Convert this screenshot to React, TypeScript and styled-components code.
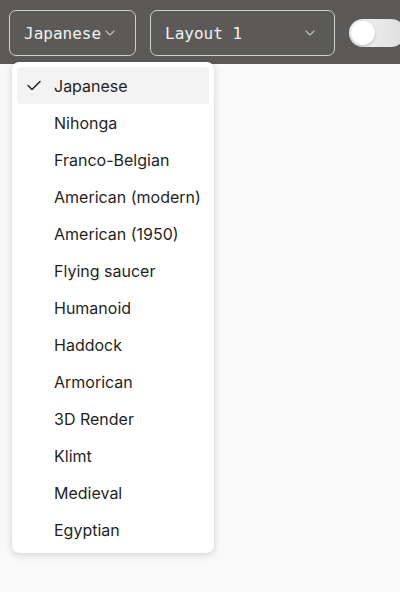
import React from "react";
import styled, { createGlobalStyle } from "styled-components";

const Global = createGlobalStyle`
  html, body { margin: 0; padding: 0; }
  body { background: #f9f9f9; font-family: Inter, "Noto Sans", sans-serif; overflow: hidden; }
  #root { width: 400px; height: 592px; }
`;

const Page = styled.div`
  position: relative;
  width: 400px;
  height: 592px;
  background: #f9f9f9;
  overflow: hidden;
`;

const Toolbar = styled.div`
  height: 64px;
  background: #5b5a58;
  display: flex;
  align-items: center;
  padding: 0 0 0 9px;
  gap: 14px;
  box-sizing: border-box;
`;

const SelectButton = styled.button<{ $w: number; $spread?: boolean }>`
  width: ${(p) => p.$w}px;
  flex-shrink: 0;
  height: 46px;
  box-sizing: border-box;
  border: 1px solid #cfcfcd;
  border-radius: 7px;
  background: transparent;
  color: #f2f2f2;
  font-family: "DejaVu Sans Mono", monospace;
  font-size: 16px;
  display: flex;
  align-items: center;
  justify-content: ${(p) => (p.$spread ? "space-between" : "flex-start")};
  gap: 4px;
  padding: 0 19px 0 14px;
  margin-top: 2px;
`;

const Chevron = () => (
  <svg width="10" height="6" viewBox="0 0 10 6" fill="none">
    <path d="M1 1l4 4 4-4" stroke="#bdbdbb" strokeWidth="1.2" strokeLinecap="round" strokeLinejoin="round" />
  </svg>
);

const Toggle = styled.div`
  width: 56px;
  height: 28px;
  border-radius: 14px;
  background: linear-gradient(90deg, #f4f4f4, #dedede);
  position: relative;
  margin-top: 2px;
  flex-shrink: 0;
`;

const Knob = styled.div`
  position: absolute;
  left: 2px;
  top: 2px;
  width: 24px;
  height: 24px;
  border-radius: 50%;
  background: #fff;
  box-shadow: 0 1px 3px rgba(0, 0, 0, 0.25);
`;

const Menu = styled.ul`
  position: absolute;
  left: 12px;
  top: 62px;
  width: 202px;
  margin: 0;
  padding: 5px;
  box-sizing: border-box;
  list-style: none;
  background: #fff;
  border-radius: 7px;
  box-shadow: 0 2px 8px rgba(0, 0, 0, 0.15), 0 0 1px rgba(0, 0, 0, 0.12);
`;

const Item = styled.li<{ $active?: boolean }>`
  height: 37px;
  display: flex;
  align-items: center;
  padding-left: 10px;
  border-radius: 4px;
  background: ${(p) => (p.$active ? "#f3f3f3" : "transparent")};
  color: #1f1f1f;
  font-size: 16px;
  font-family: Inter, "Noto Sans", sans-serif;
`;

const CheckSlot = styled.span`
  width: 27px;
  display: flex;
  align-items: center;
`;

const Check = () => (
  <svg width="14" height="11" viewBox="0 0 14 11" fill="none">
    <path d="M1 5.5l4 4L13 1.5" stroke="#222" strokeWidth="1.5" strokeLinecap="round" strokeLinejoin="round" />
  </svg>
);

const items = [
  "Japanese",
  "Nihonga",
  "Franco-Belgian",
  "American (modern)",
  "American (1950)",
  "Flying saucer",
  "Humanoid",
  "Haddock",
  "Armorican",
  "3D Render",
  "Klimt",
  "Medieval",
  "Egyptian",
];

export default function App() {
  return (
    <Page>
      <Global />
      <Toolbar>
        <SelectButton $w={127}>
          Japanese
          <Chevron />
        </SelectButton>
        <SelectButton $w={185} $spread>
          Layout 1
          <Chevron />
        </SelectButton>
        <Toggle>
          <Knob />
        </Toggle>
      </Toolbar>
      <Menu>
        {items.map((it, i) => (
          <Item key={it} $active={i === 0}>
            <CheckSlot>{i === 0 && <Check />}</CheckSlot>
            {it}
          </Item>
        ))}
      </Menu>
    </Page>
  );
}
